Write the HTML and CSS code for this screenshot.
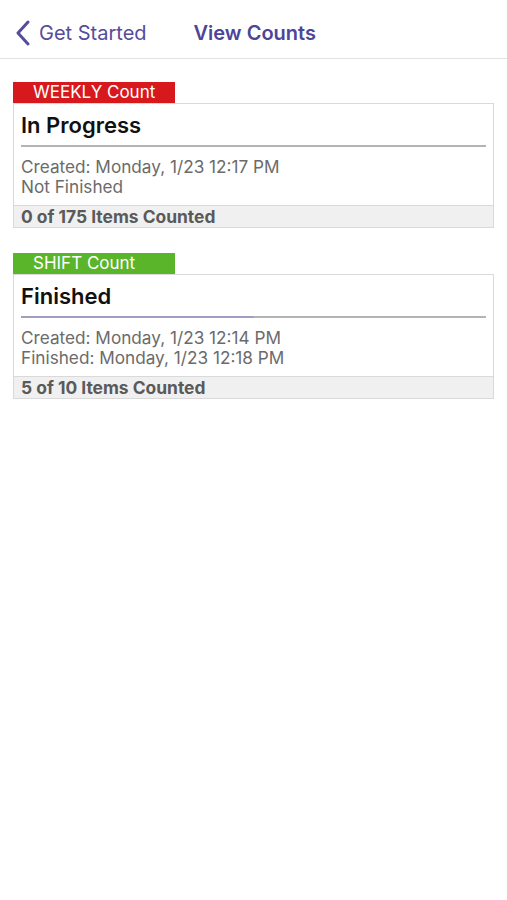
FILE: index.html
```html
<!DOCTYPE html>
<html lang="en">
<head>
  <meta charset="UTF-8">
  <meta name="viewport" content="width=device-width, initial-scale=1.0">
  <title>View Counts</title>
  <link rel="stylesheet" href="styles.css">
</head>

<body>
  <header class="topbar">
    <a class="back" href="#">
      <svg class="back-icon" width="16" height="26" viewBox="0 0 16 26">
        <polyline points="13,2 3,13 13,24" fill="none" stroke="currentColor" stroke-width="3" stroke-linecap="round" stroke-linejoin="round"/>
      </svg>
      <span>Get Started</span>
    </a>
    <h1 class="title">View Counts</h1>
  </header>

  <main class="counts">
    <!-- weekly count -->
    <section class="count">
      <div class="tag tag-weekly">WEEKLY Count</div>
      <div class="card">
        <div class="card-body">
          <h2 class="status">In Progress</h2>
          <div class="progress"><div class="progress-fill" style="width: 0%"></div></div>
          <p class="details">Created: Monday, 1/23 12:17 PM<br>Not Finished</p>
        </div>
        <div class="card-footer">0 of 175 Items Counted</div>
      </div>
    </section>

    <!-- shift count -->
    <section class="count">
      <div class="tag tag-shift">SHIFT Count</div>
      <div class="card">
        <div class="card-body">
          <h2 class="status">Finished</h2>
          <div class="progress"><div class="progress-fill" style="width: 50%"></div></div>
          <p class="details">Created: Monday, 1/23 12:14 PM<br>Finished: Monday, 1/23 12:18 PM</p>
        </div>
        <div class="card-footer">5 of 10 Items Counted</div>
      </div>
    </section>
  </main>
</body>
</html>
```
FILE: styles.css
```css
body {
  margin: 0;
  font-family: Inter, "Liberation Sans", Arial, sans-serif;
  background: #fff;
}

.topbar {
  display: flex;
  align-items: center;
  height: 50px;
  padding: 8px 0 0 15px;
  border-bottom: 1px solid #e2e2e2;
}

.back {
  display: flex;
  align-items: center;
  gap: 8px;
  color: #554c9a;
  text-decoration: none;
  font-size: 20px;
}

.back-icon {
  display: block;
}

.title {
  margin: 0 0 0 47px;
  font-size: 20px;
  font-weight: 600;
  color: #4d4596;
}

.counts {
  display: flex;
  flex-direction: column;
  gap: 25px;
  padding: 23px 13px 0 13px;
}

.tag {
  width: 162px;
  height: 21px;
  padding-left: 20px;
  box-sizing: border-box;
  color: #fff;
  font-size: 17px;
  line-height: 21px;
}

.tag-weekly {
  background: #d7191d;
}

.tag-shift {
  background: #5bb52b;
}

.card {
  border: 1px solid #d9d9d9;
}

.card-body {
  padding: 7px 7px 8px 7px;
}

.status {
  margin: 0;
  font-size: 22px;
  line-height: 28px;
  font-weight: 600;
  color: #111;
}

.progress {
  height: 2px;
  margin-top: 6px;
  background: #b4b4b4;
}

.progress-fill {
  height: 100%;
  background: #a29ec3;
}

.details {
  margin: 10px 0 0 0;
  font-size: 17.2px;
  line-height: 20px;
  color: #6b6b6b;
}

.card-footer {
  height: 21px;
  padding-left: 7px;
  border-top: 1px solid #d9d9d9;
  background: #f0f0f0;
  color: #5a5a5a;
  font-size: 17.4px;
  font-weight: 700;
  line-height: 21px;
}
```
